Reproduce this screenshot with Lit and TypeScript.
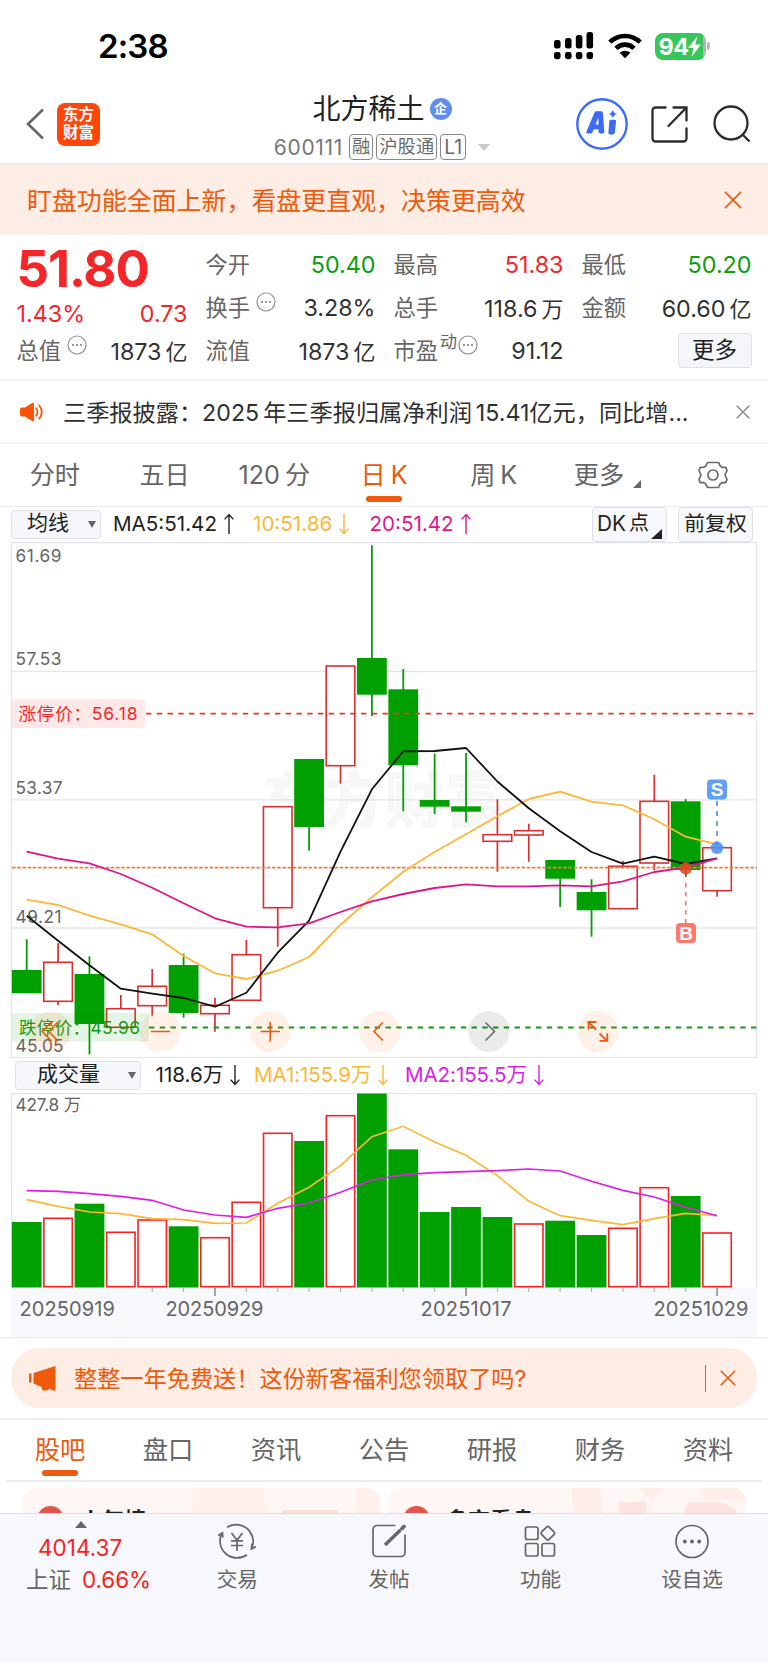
import { LitElement, html, svg, css } from "lit";
import { customElement } from "lit/decorators.js";
import { classMap } from "lit/directives/class-map.js";

const FONT = css`Inter, "Noto Sans CJK SC", sans-serif`;

const GREEN = "#00a000";
const RED = "#d9302f";

// Horizontal centre of the i-th trading day, shared by both charts.
const cx = (i: number) => 26.7 + i * 31.38;
const points = (ys: number[]) =>
  ys.map((y, i) => `${cx(i).toFixed(1)},${y}`).join(" ");

type Candle = [up: 0 | 1, top: number, bottom: number, high: number, low: number];

const CANDLES: Candle[] = [
  [0, 970, 993.3, 939.3, 993.3],
  [1, 962.3, 1001.3, 943, 1005],
  [0, 974, 1024, 956.3, 1054.3],
  [1, 1008.7, 1027.3, 995, 1027.3],
  [1, 986.3, 1005.7, 969, 1015.7],
  [0, 965, 1013, 953.7, 1017.7],
  [1, 1005.3, 1013.7, 997.7, 1031.7],
  [1, 954.7, 1000.3, 940, 1000.3],
  [1, 806.7, 907.7, 806.7, 946.7],
  [0, 759, 827, 759, 850.7],
  [1, 666, 765.7, 666, 783.7],
  [0, 658, 694.7, 545.3, 716],
  [0, 689.3, 765.3, 669, 811.3],
  [0, 800, 806.7, 753.7, 814],
  [0, 806.3, 811.7, 753, 822.3],
  [1, 834.7, 841.3, 799.3, 871.7],
  [1, 830.7, 835, 823.7, 861.7],
  [0, 860, 878.7, 860, 907],
  [0, 892, 910.3, 879.3, 936.7],
  [1, 866.3, 908.7, 860.7, 908.7],
  [1, 801.3, 863, 774.7, 870.3],
  [0, 801.3, 870, 799, 875],
  [1, 847.7, 890.7, 847.7, 896.7],
];

const MA5 = [915.7, 940.7, 965.3, 988.7, 993.7, 998, 1006.7, 992.7, 952.7, 920.7, 851.7, 789.3, 751.3, 751, 748, 781.5, 808.3, 831.3, 852, 863.7, 856.7, 864, 858.3];
const MA10 = [899.7, 905, 915.7, 924.3, 934.3, 956, 973.3, 979, 970.7, 957, 924.7, 897.3, 871.7, 852, 834.3, 816.3, 799, 791.7, 801.7, 805.3, 819.3, 836.7, 844.3];
const MA20 = [851.7, 858.7, 863.3, 874, 887.7, 903.3, 918.3, 926.7, 927.3, 923.3, 912, 901.3, 894, 888, 884.3, 886.3, 886.3, 885.3, 886.3, 881.3, 872, 867.7, 858.3];

const VOLUMES = [1222, 1218.3, 1203.7, 1232.3, 1220, 1226.3, 1237.7, 1202.3, 1133.3, 1141, 1115.7, 1093.5, 1149.3, 1212, 1207, 1217, 1224, 1220.7, 1235, 1228.3, 1187.7, 1196, 1233];
const VOLUME_UP = [0, 1, 0, 1, 1, 0, 1, 1, 1, 0, 1, 0, 0, 0, 0, 0, 1, 0, 0, 1, 1, 0, 1];
const VMA1 = [1199.7, 1206.3, 1212, 1213.7, 1218.7, 1219.7, 1223.3, 1223, 1203.3, 1187.3, 1165.7, 1136.7, 1126.3, 1142, 1155.3, 1175.7, 1201.3, 1215.7, 1220.3, 1224.7, 1218.7, 1213.3, 1215.7];
const VMA2 = [1190.7, 1191.3, 1193.7, 1196.3, 1200.3, 1210, 1215, 1217.3, 1208.3, 1203, 1192.3, 1180, 1174.7, 1172.7, 1171.7, 1170.7, 1169, 1171, 1181.3, 1190.3, 1197, 1207.3, 1215.7];

const cross = (size: number, color: string, width = 1.6) => html`<svg width=${size} height=${size} viewBox="0 0 20 20">
  <path d="M1 1 19 19M19 1 1 19" fill="none" stroke=${color} stroke-width=${(width * 20) / size} />
</svg>`;

const arrow = (dir: "up" | "down", color: string) => html`<svg width="10" height="22" viewBox="0 0 10 22">
  <path d=${dir === "up" ? "M5 21V1.5M.6 6.4 5 1.5l4.4 4.9" : "M5 1V20.5M.6 15.6 5 20.5l4.4-4.9"} fill="none" stroke=${color} stroke-width="1.4" />
</svg>`;

const info = html`<svg class="info" width="20" height="20" viewBox="0 0 20 20">
  <circle cx="10" cy="10" r="9" fill="none" stroke="#909090" stroke-width="1.2" />
  <g fill="#808080"><circle cx="6" cy="10" r="1.1" /><circle cx="10" cy="10" r="1.1" /><circle cx="14" cy="10" r="1.1" /></g>
</svg>`;

@customElement("kline-chart")
class KlineChart extends LitElement {
  static styles = css`
    :host { display: block; height: 516px; }
    svg { display: block; }
    text { font-family: ${FONT}; }
    .axis { font-size: 17.3px; fill: #666; }
    .mark { font-family: "Liberation Sans", sans-serif; font-weight: 700; font-size: 19px; fill: #fff; text-anchor: middle; }
    .watermark { font-size: 61px; font-weight: 900; fill: #f7f7f7; }
    .limit { font-size: 17.5px; }
  `;

  private candle([up, top, bottom, high, low]: Candle, i: number) {
    const x = cx(i);
    return up
      ? svg`<path d="M${x} ${high}V${top}M${x} ${bottom}V${low}" stroke=${RED} stroke-width="1.7" />
          <rect x=${x - 14.3} y=${top} width="28.6" height=${bottom - top} fill="#fff" stroke=${RED} stroke-width="1.6" />`
      : svg`<path d="M${x} ${high}V${low}" stroke=${GREEN} stroke-width="1.8" />
          <rect x=${x - 14.9} y=${top} width="29.8" height=${bottom - top} fill=${GREEN} />`;
  }

  private line(ys: number[], color: string) {
    return svg`<polyline points=${points(ys)} fill="none" stroke=${color} stroke-width="1.8" stroke-linejoin="round" />`;
  }

  render() {
    return html`<svg width="768" height="516" viewBox="0 542 768 516">
      <text class="watermark" x="262" y="823" textLength="244">东方财富</text>
      <g fill="none" stroke="#e3e5ed" stroke-width="1.3">
        <rect x="11.5" y="542.6" width="745" height="515" />
        <path d="M12 671.5H756M12 799.8H756M12 928H756" />
      </g>
      ${CANDLES.map((c, i) => this.candle(c, i))}
      <g class="axis">
        <text x="15.5" y="562" textLength="46">61.69</text>
        <text x="15.5" y="665" textLength="46">57.53</text>
        <text x="15.5" y="794.3" textLength="47">53.37</text>
        <text x="15.5" y="923" textLength="46">49.21</text>
        <text x="15.5" y="1051.6" textLength="48">45.05</text>
      </g>
      <path d="M146 713.6H754" stroke="#e8352f" stroke-width="1.8" stroke-dasharray="5.4 5.35" />
      <path d="M12 867.6H757" stroke="#f07c3e" stroke-width="1.6" stroke-dasharray="3.6 1.6" />
      <path d="M149 1027.5H757" stroke="#149a14" stroke-width="1.8" stroke-dasharray="5.4 5.35" />
      <path d="M12 699.3H142a3 3 0 0 1 3 3V725a3 3 0 0 1-3 3H12Z" fill="#ffe8e8" />
      <text class="limit" x="18.5" y="720" textLength="119" fill="#f4282c">涨停价：56.18</text>
      <path d="M12 1013H146a3 3 0 0 1 3 3V1038.6a3 3 0 0 1-3 3H12Z" fill="#00a000" fill-opacity=".1" />
      <text class="limit" x="19" y="1034.4" textLength="121" fill="#109c10">跌停价：45.96</text>
      ${this.line(MA10, "#fdb736")}
      ${this.line(MA5, "#111")}
      ${this.line(MA20, "#e0158b")}
      <path d="M717 801V845" stroke="#5c9bfa" stroke-width="1.8" stroke-dasharray="5 5" />
      <rect x="707" y="779.6" width="20" height="20" rx="4" fill="#60a0fa" />
      <text class="mark" x="717" y="796.4">S</text>
      <circle cx="717" cy="847.8" r="6.2" fill="#4b90f8" fill-opacity=".88" />
      <path d="M685.8 883V923" stroke="#f97866" stroke-width="1.6" stroke-dasharray="4.5 4.5" />
      <path d="M685.8 862V877" stroke="#b83c18" stroke-width="1.6" />
      <circle cx="685.8" cy="868.4" r="6.2" fill="#e04a26" fill-opacity=".88" />
      <rect x="676" y="923" width="20" height="20" rx="4" fill="#fd7a68" />
      <text class="mark" x="686" y="939.8">B</text>
      <g fill="#ff6a1a" fill-opacity=".1">
        ${[50.8, 160.4, 270, 379.6, 598].map((x) => svg`<circle cx=${x} cy="1031.5" r="20.6" />`)}
      </g>
      <circle cx="489" cy="1031.5" r="20.6" fill="#000" fill-opacity=".08" />
      <g fill="none" stroke="#f0560a" stroke-width="1.6">
        <path d="M51.5 1022 42.3 1031.5l9.2 9.500M58 1022 48.800 1031.500l9.200 9.500" />
        <path d="M151 1031.500h19M260.500 1031.500h19.500M270.200 1022v19.500" />
        <path d="M383 1022.500 374 1031.500l9 9" />
        <path d="M596 1029.500 588.500 1022.200M588.500 1029.500v-7.500h8M599.500 1033.500l7.500 7.300M599.500 1040.800h7.800v-7.500" stroke-width="1.8" />
      </g>
      <path d="M485.500 1022.500 494.500 1031.500l-9 9" fill="none" stroke="#666" stroke-width="1.5" />
    </svg>`;
  }
}

@customElement("volume-chart")
class VolumeChart extends LitElement {
  static styles = css`
    :host { display: block; height: 246px; }
    svg { display: block; }
    text { font-family: ${FONT}; fill: #666; }
    .peak { font-size: 17.3px; }
    .date { font-size: 20px; }
  `;

  render() {
    return html`<svg width="768" height="246" viewBox="0 1093 768 246">
      <rect x="11" y="1287.5" width="746" height="50" fill="#f7f8fb" />
      <path d="M11.5 1288V1093.6H756.5V1288" fill="none" stroke="#e3e5ed" stroke-width="1.2" />
      <path d="M0 1337.7H768" stroke="#e9e9ec" stroke-width="1.3" />
      ${VOLUMES.map((y, i) =>
        VOLUME_UP[i]
          ? svg`<rect x=${cx(i) - 14.2} y=${y} width="28.4" height=${1286.7 - y} fill="#fff" stroke="#fb2022" stroke-width="1.6" />`
          : svg`<rect x=${cx(i) - 14.9} y=${y} width="29.8" height=${1287.5 - y} fill=${GREEN} />`
      )}
      ${VOLUMES.map((_, i) => {
        if (i < 4) return null;
        const major = i % 8 === 6;
        return svg`<path d="M${cx(i)} 1288V${major ? 1296 : 1292}" stroke=${major ? "#888" : "#aaa"} stroke-width=${major ? 1.5 : 1} />`;
      })}
      <text class="peak" x="15.5" y="1111.3" textLength="65.5">427.8 万</text>
      <polyline points=${points(VMA1)} fill="none" stroke="#fdb736" stroke-width="1.7" />
      <polyline points=${points(VMA2)} fill="none" stroke="#dd1ee6" stroke-width="1.7" />
      <g class="date">
        <text x="19.5" y="1315.5" textLength="95.5">20250919</text>
        <text x="165.5" y="1315.5" textLength="98">20250929</text>
        <text x="420.5" y="1315.5" textLength="91">20251017</text>
        <text x="653.5" y="1315.5" textLength="95">20251029</text>
      </g>
    </svg>`;
  }
}

@customElement("app-root")
class AppRoot extends LitElement {
  static styles = css`
    :host { display: block; width: 768px; height: 1662px; overflow: hidden; background: #fff; font-family: ${FONT}; color: #333; }
    * { box-sizing: border-box; }
    svg { display: block; flex: none; }
    .page { display: flex; flex-direction: column; height: 1662px; white-space: nowrap; }
    .page > * { flex: none; }

    .status { height: 92px; display: flex; align-items: center; padding: 0 58px 0 98px; }
    .clock { flex: 1; font-size: 33px; font-weight: 600; line-height: 40px; color: #000; letter-spacing: -0.9px; }
    .signal { margin-right: 14px; }
    .wifi { margin-right: 13px; }
    .battery { display: flex; align-items: center; gap: 1.5px; }
    .charge { width: 51px; height: 27px; border-radius: 8px; background: linear-gradient(90deg, #35c759 48px, #b4b4b4 48px); display: flex; align-items: center; padding-left: 4px; color: #fff; font-size: 23.5px; font-weight: 700; letter-spacing: -0.6px; line-height: 27px; }
    .nub { width: 3px; height: 8px; border-radius: 0 3px 3px 0; background: #b8b8b8; }

    .header { height: 73px; border-bottom: 2px solid #ececec; display: grid; grid-template-columns: 1fr auto 1fr; }
    .left { display: flex; align-items: center; padding: 0 0 7px 26px; gap: 13px; }
    .logo { width: 43px; height: 43px; border-radius: 8px; background: #ff4508; color: #fff; font-size: 15.5px; line-height: 18px; font-weight: 700; display: flex; flex-direction: column; align-items: center; justify-content: center; }
    .name { display: flex; flex-direction: column; align-items: center; padding: 0 4px 0 0; }
    .title { display: flex; align-items: center; height: 34px; gap: 5px; font-size: 28px; line-height: 34px; color: #222; }
    .badge { width: 22px; height: 22px; border-radius: 50%; background: #628df0; color: #fff; font-size: 13px; font-weight: 700; line-height: 21px; text-align: center; }
    .sub { display: flex; align-items: center; margin-top: 8px; height: 26px; font-size: 21px; color: #777; }
    .code { letter-spacing: 0.7px; margin-right: 6px; }
    .chip { height: 26px; border: 1.3px solid #888; border-radius: 4px; padding: 0 2px; line-height: 23px; font-size: 18.3px; margin-right: 3px; color: #6c6c6c; }
    .chip.level { font-size: 19.5px; padding: 0 3px; line-height: 24px; }
    .drop { margin-left: 9px; }
    .tools { display: flex; align-items: center; justify-content: flex-end; padding: 0 17px 7px 0; }
    .ai { margin-right: 23px; }
    .share { margin-right: 25px; }

    .banner { height: 70px; background: #feede5; display: flex; align-items: center; justify-content: space-between; padding: 0 26px 0 27px; color: #ee5a0b; font-size: 24.95px; }
    .banner .text { margin-top: -3px; }

    .quotes { height: 146px; border-bottom: 2px solid #f3f3f3; padding: 7.5px 16px 0 16.5px; display: grid; grid-template-columns: 171px 170px 170px 170px; column-gap: 18px; font-size: 23.3px; }
    .col { display: flex; flex-direction: column; }
    .row { height: 43px; display: flex; align-items: center; justify-content: space-between; }
    .price { height: 50px; font-size: 51px; line-height: 51px; font-weight: 650; color: #f4262a; letter-spacing: -1.1px; }
    .change { height: 41px; }
    .total { height: 33px; }
    .label { display: flex; align-items: center; font-size: 22.2px; color: #666; margin-top: -2px; }
    .info { margin: -8px 0 0 6px; }
    .label .dyn { font-size: 17px; margin: -18px 0 0 2px; }
    .dyn + .info { margin-left: 1px; }
    .red { color: #f4262a; }
    .green { color: #0aa00a; }
    .unit { margin-left: 4px; font-size: 22px; }
    .more { width: 74px; height: 35px; margin-left: auto; border: 1.5px solid #dfe1e6; border-radius: 4px; background: #f5f6fa; text-align: center; line-height: 31px; font-size: 22.5px; color: #222; }

    .notice { height: 63px; border-bottom: 2px solid #f3f3f3; display: flex; align-items: center; padding: 0 18px 0 20px; font-size: 23.2px; }
    .notice .text { flex: 1; margin-left: 19px; margin-top: -1px; color: #303030; }
    .thin { margin: 0 4px; }

    .periods { height: 63px; border-bottom: 1.5px solid #ededf0; display: flex; font-size: 25.2px; color: #666; }
    .period { flex: 1 1 0; display: flex; justify-content: center; position: relative; line-height: 62px; }
    .period .thin { margin: 0 0 0 5px; }
    .active { color: #ee5a0b; }
    .active::after { content: ""; position: absolute; left: 50%; width: 36px; height: 6px; margin-left: -18px; bottom: 4px; border-radius: 3px; background: #ee5a0b; }
    .period svg { align-self: center; }
    .period .corner { margin: 17px -8px 0 9px; }

    .legend { display: flex; align-items: center; height: 35px; color: #222; }
    .select { height: 29px; border: 1.5px solid #dfe1e6; border-radius: 4px; background: #f6f7fa; display: flex; align-items: center; justify-content: space-between; font-size: 21px; line-height: 24px; }
    .select span { margin-top: -3px; }
    .ma-select { width: 90px; margin-left: 11px; padding: 0 4px 0 15px; }
    .vol-select { width: 126px; margin-left: 15px; padding: 0 4px 0 21px; }
    .ma { display: flex; align-items: center; font-size: 20.6px; line-height: 24px; margin-top: -1px; }
    .ma svg { margin-left: 7px; }
    .m5 { width: 140px; margin-left: 12px; }
    .m10 { width: 116.5px; color: #fdb736; }
    .m20 { flex: 1; color: #e0158b; }
    .v0 { width: 98.5px; margin-left: 14.5px; }
    .v1 { width: 151px; color: #fdb736; }
    .v2 { color: #dd1ee6; }
    .v1, .v2 { letter-spacing: -0.1px; }
    .button { height: 35px; width: 75px; border: 1.5px solid #dfe1e6; border-radius: 4px; background: #f7f8fb; font-size: 20.8px; line-height: 31px; display: flex; justify-content: center; color: #222; }
    .dk { justify-content: flex-start; padding-left: 4px; margin-right: 11px; }
    .dkp { margin: 0 2px 0 3px; font-size: 20px; }
    .dk svg { align-self: flex-end; margin-bottom: 2px; }
    .fq { margin-right: 15px; }

    .promo { height: 81px; border-bottom: 2px solid #f0f0f0; padding: 9px 11px 0; }
    .pill { height: 60px; border-radius: 29px; background: #feede5; color: #ee5a0b; display: flex; align-items: center; padding: 0 21px 0 18px; font-size: 23.2px; }
    .pill .text { flex: 1; margin: -3px 0 0 18px; }
    .divider { width: 1.5px; height: 27px; background: #ee5a0b; margin-right: 14px; }

    .sections { height: 62px; margin: 0 6px; border-bottom: 2px solid #ececf0; display: flex; font-size: 25.3px; color: #666; }
    .section { flex: 1 1 0; text-align: center; line-height: 60px; position: relative; }
    .cards { height: 31px; overflow: hidden; display: flex; gap: 8px; padding: 6px 22px 0; }
    .card { flex: 1; height: 60px; border-radius: 13px; background: #fff7f5; display: flex; padding: 18px 0 0 15px; font-size: 22px; font-weight: 700; line-height: 28px; color: #222; position: relative; overflow: hidden; }
    .card > * { position: relative; }
    .card .decor { position: absolute; left: 0; top: 0; }
    .dot { width: 27px; height: 27px; border-radius: 50%; background: #e0564f; margin-right: 16px; }

    .nav { height: 149px; border-top: 1.5px solid #dcdfe4; background: #f7f8fb; display: flex; color: #666; }
    .item { width: 151.6px; display: flex; flex-direction: column; align-items: center; font-size: 20.6px; line-height: 26px; padding-top: 9px; gap: 8px; }
    .index { width: 161.5px; font-size: 22.5px; align-items: flex-start; padding: 7px 0 0 26px; gap: 0; line-height: 31px; }
    .index svg { margin: 0 0 3px 49px; }
    .points { color: #fb1f22; padding-left: 12px; line-height: 33px; }
    .pct { color: #fb1f22; margin-left: 11px; letter-spacing: -0.1px; }
  `;

  render() {
    const periods = ["分时", "五日", "120", "日", "周", "更多"];
    return html`<div class="page">
      <div class="status">
        <div class="clock">2:38</div>
        <svg class="signal" width="40" height="28" viewBox="0 0 40 28">
          <rect x="0" y="8" width="6.6" height="8.5" rx="2.5" /><rect x="11" y="6" width="6.6" height="10.5" rx="2.5" />
          <rect x="21.8" y="3" width="6.6" height="13.5" rx="2.5" /><rect x="32.5" y="0" width="6.6" height="16.5" rx="2.5" />
          ${[0, 11, 21.8, 32.5].map((x) => svg`<rect x=${x} y="20" width="6.6" height="7.2" rx="2.4" />`)}
        </svg>
        <svg class="wifi" width="34" height="26" viewBox="0 0 34 26">
          <path d="M1.8 9.2a21.6 21.6 0 0 1 30.4 0M8 15.3a12.8 12.8 0 0 1 18 0" fill="none" stroke="#000" stroke-width="4.6" />
          <path d="M11.600 19.800a8 8 0 0 1 10.800 0L17 25.200Z" />
        </svg>
        <div class="battery">
          <div class="charge">94<svg width="13" height="21" viewBox="0 0 13 21"><path d="M9.500 0 0 12h5.500L3.500 21 13 8.500H7.300Z" fill="#fff" /></svg></div>
          <div class="nub"></div>
        </div>
      </div>

      <div class="header">
        <div class="left">
          <svg width="18" height="32" viewBox="0 0 18 32"><path d="M17 1.5 2 16l15 14.5" fill="none" stroke="#666" stroke-width="2.6" /></svg>
          <div class="logo"><span>东方</span><span>财富</span></div>
        </div>
        <div class="name">
          <div class="title">北方稀土<span class="badge">企</span></div>
          <div class="sub">
            <span class="code">600111</span><span class="chip">融</span><span class="chip">沪股通</span><span class="chip level">L1</span>
            <svg class="drop" width="12" height="7" viewBox="0 0 12 7"><path d="M0 0H12L6 7Z" fill="#c8c8c8" /></svg>
          </div>
        </div>
        <div class="tools">
          <svg class="ai" width="52" height="52" viewBox="0 0 52 52">
            <circle cx="26" cy="26" r="24.7" fill="none" stroke="#3a6bfb" stroke-width="2.4" />
            <path fill="#3a6bfb" fill-rule="evenodd" d="M18.500 14.500Q19 13.300 20.500 13.300H25Q26.600 13.300 26.900 15L28.300 33.500Q28.400 35.400 26.700 35.400H24Q22.700 35.400 22.600 34L22.400 31.200H17.800L16.500 34.200Q16 35.400 14.500 35.400H11.500Q9.700 35.400 10.500 33.500ZM22.200 19.500 19.500 26.500H22.600Z" />
            <path fill="#3a6bfb" d="M36.800 11.500Q37.600 15.200 41 16 37.600 16.800 36.800 20.200 36 16.800 32.600 16 36 15.200 36.800 11.500ZM34.500 21.800H38.800Q40.300 21.800 40.100 23.300L38.800 34.500Q38.500 36.600 36.600 36.600H34Q32.200 36.600 32.400 34.600L33.300 23.200Q33.400 21.800 34.500 21.800Z" />
          </svg>
          <svg class="share" width="37" height="37" viewBox="0 0 37 37">
            <path d="M14.500 1.500H4.500a3 3 0 0 0-3 3V32.500a3 3 0 0 0 3 3H32.500a3 3 0 0 0 3-3V22.500M22.500 1.500H35.500V14.500M35 2 17.500 20" fill="none" stroke="#2c2c2c" stroke-width="2.300" stroke-linecap="round" />
          </svg>
          <svg width="38" height="38" viewBox="0 0 38 38"><circle cx="18" cy="18" r="16.5" fill="none" stroke="#2c2c2c" stroke-width="2.3" /><path d="M29.5 29.5 36.5 36.5" stroke="#2c2c2c" stroke-width="2.3" /></svg>
        </div>
      </div>

      <div class="banner"><span class="text">盯盘功能全面上新，看盘更直观，决策更高效</span>${cross(18, "#ee5a0b")}</div>

      <div class="quotes">
        <div class="col">
          <div class="price">51.80</div>
          <div class="row change red"><span>1.43%</span><span>0.73</span></div>
          <div class="row total"><span class="label">总值${info}</span><span>1873<span class="unit">亿</span></span></div>
        </div>
        <div class="col">
          <div class="row"><span class="label">今开</span><span class="green">50.40</span></div>
          <div class="row"><span class="label">换手${info}</span><span>3.28%</span></div>
          <div class="row"><span class="label">流值</span><span>1873<span class="unit">亿</span></span></div>
        </div>
        <div class="col">
          <div class="row"><span class="label">最高</span><span class="red">51.83</span></div>
          <div class="row"><span class="label">总手</span><span>118.6<span class="unit">万</span></span></div>
          <div class="row"><span class="label">市盈<span class="dyn">动</span>${info}</span><span>91.12</span></div>
        </div>
        <div class="col">
          <div class="row"><span class="label">最低</span><span class="green">50.20</span></div>
          <div class="row"><span class="label">金额</span><span>60.60<span class="unit">亿</span></span></div>
          <div class="row"><div class="more">更多</div></div>
        </div>
      </div>

      <div class="notice">
        <svg width="24" height="20" viewBox="0 0 24 20">
          <path d="M0 7.500Q0 5.500 2 5.500H5L12.500.800Q14 .300 14 1.800V18.200Q14 19.700 12.500 19.200L5 14.500H2Q0 14.500 0 12.500Z" fill="#ff5208" />
          <path d="M16.300 6.300Q18.500 10 16.300 13.700M19.300 3.500Q24.300 10 19.300 16.500" fill="none" stroke="#ff5208" stroke-width="1.800" stroke-linecap="round" />
        </svg>
        <span class="text">三季报披露：2025<span class="thin">年三季报归属净利润</span>15.41亿元，同比增...</span>
        ${cross(14, "#888", 1.4)}
      </div>

      <div class="periods">
        ${periods.map(
          (p, i) => html`<div class=${classMap({ period: true, active: i === 3 })}>
            <span>${p}</span>${i === 2 ? html`<span class="thin">分</span>` : null}${i === 3 || i === 4 ? html`<span class="thin">K</span>` : null}
            ${i === 5 ? html`<svg class="corner" width="8" height="8" viewBox="0 0 8 8"><path d="M8 0V8H0Z" fill="#666" /></svg>` : null}
          </div>`
        )}
        <div class="period">
          <svg width="30" height="28" viewBox="0 0 30 28"><path d="M9.500 1.500h11l1.800 3.600 2.200 1.300h3.300L29 9.500l-2 4.500 2 4.500-1.300 3.100h-3.300l-2.200 1.300-1.700 3.600h-11l-1.800-3.600-2.200-1.300H2.200L1 18.500 3 14 1 9.500l1.300-3.100h3.300l2.200-1.300Z" fill="none" stroke="#6a6a6a" stroke-width="1.700" stroke-linejoin="round" /><circle cx="15" cy="14" r="5" fill="none" stroke="#6a6a6a" stroke-width="1.700" /></svg>
        </div>
      </div>

      <div class="legend">
        <div class="select ma-select"><span>均线</span><svg width="8" height="7" viewBox="0 0 8 7"><path d="M0 0H8L4 7Z" fill="#666" /></svg></div>
        <span class="ma m5">MA5:51.42${arrow("up", "#222")}</span>
        <span class="ma m10">10:51.86${arrow("down", "#fdb736")}</span>
        <span class="ma m20">20:51.42${arrow("up", "#e0158b")}</span>
        <span class="button dk">DK<span class="dkp">点</span><svg width="11" height="10" viewBox="0 0 11 10"><path d="M11 0V10H0Z" fill="#222" /></svg></span>
        <span class="button fq">前复权</span>
      </div>
      <kline-chart></kline-chart>
      <div class="legend">
        <div class="select vol-select"><span>成交量</span><svg width="8" height="7" viewBox="0 0 8 7"><path d="M0 0H8L4 7Z" fill="#666" /></svg></div>
        <span class="ma v0">118.6万${arrow("down", "#222")}</span>
        <span class="ma v1">MA1:155.9万${arrow("down", "#fdb736")}</span>
        <span class="ma v2">MA2:155.5万${arrow("down", "#dd1ee6")}</span>
      </div>
      <volume-chart></volume-chart>

      <div class="promo">
        <div class="pill">
          <svg width="27" height="25" viewBox="0 0 27 25"><path d="M0 7.500H2.500V16.500H0ZM4.500 7 26.500 0V25L20 23 18 24.500H13.500L12.500 21 4.500 17.500Z" fill="#ee5a0b" /></svg>
          <span class="text">整整一年免费送！这份新客福利您领取了吗?</span>
          <span class="divider"></span>${cross(16, "#ee5a0b")}
        </div>
      </div>
      <div class="sections">
        ${["股吧", "盘口", "资讯", "公告", "研报", "财务", "资料"].map(
          (s, i) => html`<div class=${classMap({ section: true, active: i === 0 })}>${s}</div>`
        )}
      </div>
      <div class="cards">
        <div class="card">
          <svg class="decor" width="358" height="60" viewBox="0 0 358 60"><path d="M171 0H243V60H171ZM334 0H358V60H334Z" fill="#fff0ee" /><path d="M260 22H316V60H260Z" fill="#fde0dd" /></svg>
          <span class="dot"></span><span>人气榜</span>
        </div>
        <div class="card">
          <svg class="decor" width="358" height="60" viewBox="0 0 358 60"><path d="M183 0H212L218 60H190ZM252 0H275L264 14ZM310 0H358V14Q340 10 316 12Z" fill="#ffedea" /><path d="M230 14H258L262 60H234ZM280 60 300 14H330Q346 16 349 26V60Z" fill="#fee4e0" /></svg>
          <span class="dot"></span><span>多空看盘</span>
        </div>
      </div>

      <div class="nav">
        <div class="item index">
          <svg width="12" height="7" viewBox="0 0 12 7"><path d="M0 7H12L6 0Z" fill="#666" /></svg>
          <span class="points">4014.37</span>
          <span>上证<span class="pct">0.66%</span></span>
        </div>
        <div class="item">
          <svg width="38" height="36" viewBox="0 0 38 36" fill="none" stroke="#666" stroke-width="1.7">
            <path d="M9 4.300A17 17 0 0 1 34.300 24M29 31.700A17 17 0 0 1 4 10M0 12.500 4.500 10 4.800 14.500M38 23.500 33.500 26 34 20.500" /><path d="M13.500 10 19 17 24.500 10M19 17V28M13 17.800H25M13 22.500H25" />
          </svg>
          <span>交易</span>
        </div>
        <div class="item">
          <svg width="36" height="36" viewBox="0 0 36 36" fill="none" stroke="#666" stroke-width="1.7">
            <path d="M24.500 2.500H6a4 4 0 0 0-4 4V29.500a4 4 0 0 0 4 4H30a4 4 0 0 0 4-4V11.500" /><path d="M14 22 29.500 7" stroke-width="3.400" /><path d="M31 5.500 33 3.500" stroke-width="3.800" stroke-linecap="round" />
          </svg>
          <span>发帖</span>
        </div>
        <div class="item">
          <svg width="34" height="36" viewBox="0 0 34 36" fill="none" stroke="#666" stroke-width="1.7">
            <rect x="2.5" y="4" width="12.5" height="12.5" rx="2" /><rect x="2.5" y="20.5" width="12.5" height="12.5" rx="2" /><rect x="19" y="20.5" width="12.5" height="12.5" rx="2" /><rect x="19.6" y="5" width="10.5" height="10.5" rx="1.5" transform="rotate(45 24.85 10.25)" />
          </svg>
          <span>功能</span>
        </div>
        <div class="item">
          <svg width="36" height="36" viewBox="0 0 36 36"><circle cx="18" cy="18.5" r="16" fill="none" stroke="#666" stroke-width="1.7" /><g fill="#666"><circle cx="10.8" cy="18.5" r="1.9" /><circle cx="18" cy="18.5" r="1.9" /><circle cx="25.2" cy="18.5" r="1.9" /></g></svg>
          <span>设自选</span>
        </div>
      </div>
    </div>`;
  }
}

declare global {
  interface HTMLElementTagNameMap {
    "app-root": AppRoot;
    "kline-chart": KlineChart;
    "volume-chart": VolumeChart;
  }
}
